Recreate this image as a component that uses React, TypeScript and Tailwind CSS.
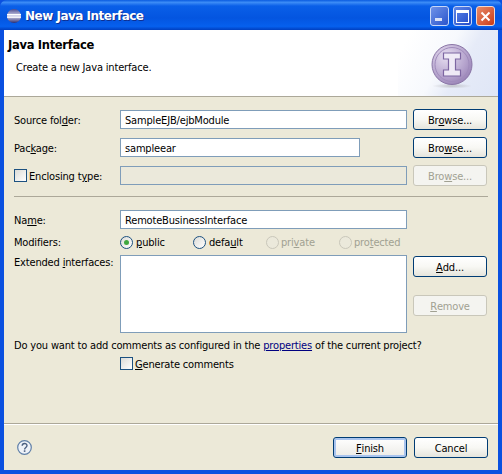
import React from "react";

const font = "font-['DejaVu_Sans_Condensed','Noto_Sans',sans-serif] text-[11px] leading-[15px] tracking-[-0.17px]";

function Btn({ children, disabled, focus, className = "" }: { children: React.ReactNode; disabled?: boolean; focus?: boolean; className?: string }) {
  const base = "w-[74px] h-[21px] shrink-0 flex items-center justify-center rounded-[3px] border pt-[1px]";
  const look = disabled
    ? "border-[#c9c7ba] bg-[#f4f4f0] text-[#a1a192]"
    : focus
    ? "border-[#003c74] bg-gradient-to-b from-[#fff] to-[#ecebe6] text-black shadow-[inset_0_0_0_2px_#a9c4ee]"
    : "border-[#003c74] bg-gradient-to-b from-[#fff] via-[#f8f8f4] to-[#e6e5dc] text-black";
  return <div className={`${base} ${look} ${className}`}>{children}</div>;
}

function Field({ value, disabled, className = "" }: { value?: string; disabled?: boolean; className?: string }) {
  return (
    <div className={`h-[19px] border border-[#7f9db9] pl-[4px] pt-[2px] flex items-center text-black ${disabled ? "bg-[#ebe9db]" : "bg-white"} ${className}`}>{value}</div>
  );
}

function Check() {
  return <div className="w-[13px] h-[13px] shrink-0 border border-[#1c5180] bg-gradient-to-br from-[#dcdcd7] to-white" />;
}

function Radio({ on, disabled }: { on?: boolean; disabled?: boolean }) {
  return (
    <div className={`w-[13px] h-[13px] shrink-0 rounded-full border flex items-center justify-center ${disabled ? "border-[#c9c7ba] bg-[#ebe9db]" : "border-[#1c5180] bg-gradient-to-br from-[#dcdcd7] to-white"}`}>
      {on && <div className="w-[5px] h-[5px] rounded-full bg-[#3fa83f]" />}
    </div>
  );
}

function Eclipse() {
  return (
    <svg width="16" height="16" viewBox="0 0 16 16" className="shrink-0">
      <defs>
        <linearGradient id="ec" x1="0" y1="0" x2="0" y2="1">
          <stop offset="0" stopColor="#4a4a8c" />
          <stop offset="0.5" stopColor="#d8d8f0" />
          <stop offset="1" stopColor="#2c2c70" />
        </linearGradient>
      </defs>
      <circle cx="8" cy="8" r="7" fill="url(#ec)" />
      <rect x="1" y="6" width="14" height="1.2" fill="#fff" />
      <rect x="1" y="8.6" width="14" height="1.2" fill="#fff" />
    </svg>
  );
}

function Coin() {
  return (
    <svg width="42" height="46" viewBox="0 0 42 46">
      <defs>
        <radialGradient id="coin" cx="0.35" cy="0.3" r="0.85">
          <stop offset="0" stopColor="#e6def0" />
          <stop offset="0.6" stopColor="#b5a3cd" />
          <stop offset="1" stopColor="#8f78ae" />
        </radialGradient>
        <radialGradient id="sh" cx="0.5" cy="0.5" r="0.5">
          <stop offset="0" stopColor="#a8a8a8" stopOpacity="0.6" />
          <stop offset="1" stopColor="#a8a8a8" stopOpacity="0" />
        </radialGradient>
      </defs>
      <ellipse cx="21" cy="43" rx="20" ry="2.5" fill="url(#sh)" />
      <circle cx="21" cy="21.5" r="20" fill="url(#coin)" stroke="#8a76a6" strokeWidth="1" />
      <circle cx="21" cy="21.5" r="17" fill="none" stroke="#a08cbc" strokeWidth="1" />
      <path d="M12.5 10h17v6h-5v11h5v6h-17v-6h5V16h-5z" fill="#efeaf6" stroke="#7d66a2" strokeWidth="1.2" />
    </svg>
  );
}

function TitleBar() {
  return (
    <div className="h-[30px] flex items-center pl-[6px] pr-[7px] pt-[2px] rounded-t-[7px] bg-[linear-gradient(180deg,#0a5be0_0%,#3c8cf6_8%,#0a5fe8_20%,#0455e0_60%,#0660ee_88%,#003fc0_100%)]">
      <Eclipse />
      <div className="ml-[3px] flex-1 font-['DejaVu_Sans',sans-serif] font-bold text-[12px] tracking-[-0.5px] text-white [text-shadow:1px_1px_0_#0f2f90]">New Java Interface</div>
      <div className="flex gap-[4px]">
        <div className="w-[19px] h-[20px] rounded-[3px] border border-[#c8d8f8] bg-gradient-to-br from-[#6f92e8] to-[#2c54cc] flex items-end pl-[4px] pb-[4px]">
          <div className="w-[7px] h-[3px] bg-white/80" />
        </div>
        <div className="w-[19px] h-[20px] rounded-[3px] border border-[#c8d8f8] bg-gradient-to-br from-[#5f86e8] to-[#2349c8] flex items-center justify-center">
          <div className="w-[13px] h-[13px] border border-white border-t-[3px]" />
        </div>
        <div className="w-[19px] h-[20px] rounded-[3px] border border-[#f0d8d0] bg-gradient-to-br from-[#e88a68] to-[#c83810] flex items-center justify-center">
          <svg width="11" height="11" viewBox="0 0 11 11"><path d="M1.5 1.5l8 8M9.5 1.5l-8 8" stroke="#fff" strokeWidth="2" /></svg>
        </div>
      </div>
    </div>
  );
}

function Banner() {
  return (
    <div className="h-[67px] flex border-b border-[#aca899] bg-white">
      <div className="flex-1 pl-[4px]">
        <div className="mt-[8px] font-['DejaVu_Sans',sans-serif] font-bold text-[11.5px] leading-[14px] tracking-[-0.3px] text-black">Java Interface</div>
        <div className="mt-[8px] ml-[8px] text-black">Create a new Java interface.</div>
      </div>
      <div className="w-[100px] flex items-start pl-[33px] pt-[13px] bg-[linear-gradient(120deg,#ffffff_10%,#f7f9fd_45%,#e6ebf8_62%,#dfe6f6_100%)]">
        <Coin />
      </div>
    </div>
  );
}

export default function App() {
  return (
    <div className={`w-[502px] h-[474px] bg-[#0a50e0] px-[4px] pb-[4px] overflow-hidden flex flex-col ${font}`}>
      <div className="-mx-[4px]"><TitleBar /></div>
      <Banner />
      <div className="flex-1 bg-[#ece9d8] flex flex-col text-black">
        <div className="pl-[10px] pr-[10px] pt-[12px]">
          <div className="flex items-center h-[21px]">
            <div className="w-[106px] pt-[2px]">Source fol<u>d</u>er:</div>
            <Field value="SampleEJB/ejbModule" className="w-[287px]" />
            <Btn className="ml-[6px]">Br<u>o</u>wse...</Btn>
          </div>
          <div className="flex items-center h-[21px] mt-[7px]">
            <div className="w-[106px] pt-[2px]">Pac<u>k</u>age:</div>
            <Field value="sampleear" className="w-[240px]" />
            <Btn className="ml-[53px]">Bro<u>w</u>se...</Btn>
          </div>
          <div className="flex items-center h-[21px] mt-[7px]">
            <div className="w-[106px] flex items-center gap-[2px]">
              <Check />
              <span className="pt-[2px]">Enclosing t<u>y</u>pe:</span>
            </div>
            <Field disabled className="w-[287px]" />
            <Btn disabled className="ml-[6px]">Bro<u>w</u>se...</Btn>
          </div>
        </div>
        <div className="mx-[10px] mt-[10px] h-[1px] bg-[#aca899]" />
        <div className="pl-[10px] pr-[10px] mt-[13px]">
          <div className="flex items-center h-[19px]">
            <div className="w-[106px] pt-[2px]">Na<u>m</u>e:</div>
            <Field value="RemoteBusinessInterface" className="w-[287px]" />
          </div>
          <div className="flex items-center h-[13px] mt-[7px]">
            <div className="w-[106px]">Modifiers:</div>
            <div className="w-[73px] flex items-center gap-[3px]"><Radio on /><span><u>p</u>ublic</span></div>
            <div className="w-[73px] flex items-center gap-[3px]"><Radio /><span>defa<u>u</u>lt</span></div>
            <div className="w-[73px] flex items-center gap-[2px] text-[#a1a192]"><Radio disabled /><span>pri<u>v</u>ate</span></div>
            <div className="flex items-center gap-[2px] text-[#a1a192]"><Radio disabled /><span>pro<u>t</u>ected</span></div>
          </div>
          <div className="flex mt-[6px]">
            <div className="w-[106px]">Extended <u>i</u>nterfaces:</div>
            <div className="w-[287px] h-[78px] border border-[#7f9db9] bg-white" />
            <div className="ml-[6px] pt-[1px] flex flex-col gap-[18px]">
              <Btn><u>A</u>dd...</Btn>
              <Btn disabled><u>R</u>emove</Btn>
            </div>
          </div>
          <div className="mt-[5px]">Do you want to add comments as configured in the <u className="text-[#000080]">properties</u> of the current project?</div>
          <div className="flex items-center mt-[2px] pl-[106px] gap-[2px]">
            <Check />
            <span className="pt-[2px]"><u>G</u>enerate comments</span>
          </div>
        </div>
        <div className="mt-auto h-[1px] bg-[#aca899]" />
        <div className="h-[46px] border-t border-white flex items-center pl-[13px] pr-[10px]">
          <svg width="15" height="15" viewBox="0 0 15 15" className="shrink-0">
            <circle cx="7.5" cy="7.5" r="6.8" fill="#eef2f8" stroke="#5f7fa8" strokeWidth="1.2" />
            <path d="M5.2 5.8c0-3 4.8-3 4.8-.2 0 1.9-2.4 1.9-2.4 3.8" fill="none" stroke="#4a5f80" strokeWidth="1.4" />
            <rect x="6.8" y="10.3" width="1.6" height="1.6" fill="#4a5f80" />
          </svg>
          <div className="ml-auto flex gap-[7px]">
            <Btn focus><u>F</u>inish</Btn>
            <Btn>Cancel</Btn>
          </div>
        </div>
      </div>
    </div>
  );
}
